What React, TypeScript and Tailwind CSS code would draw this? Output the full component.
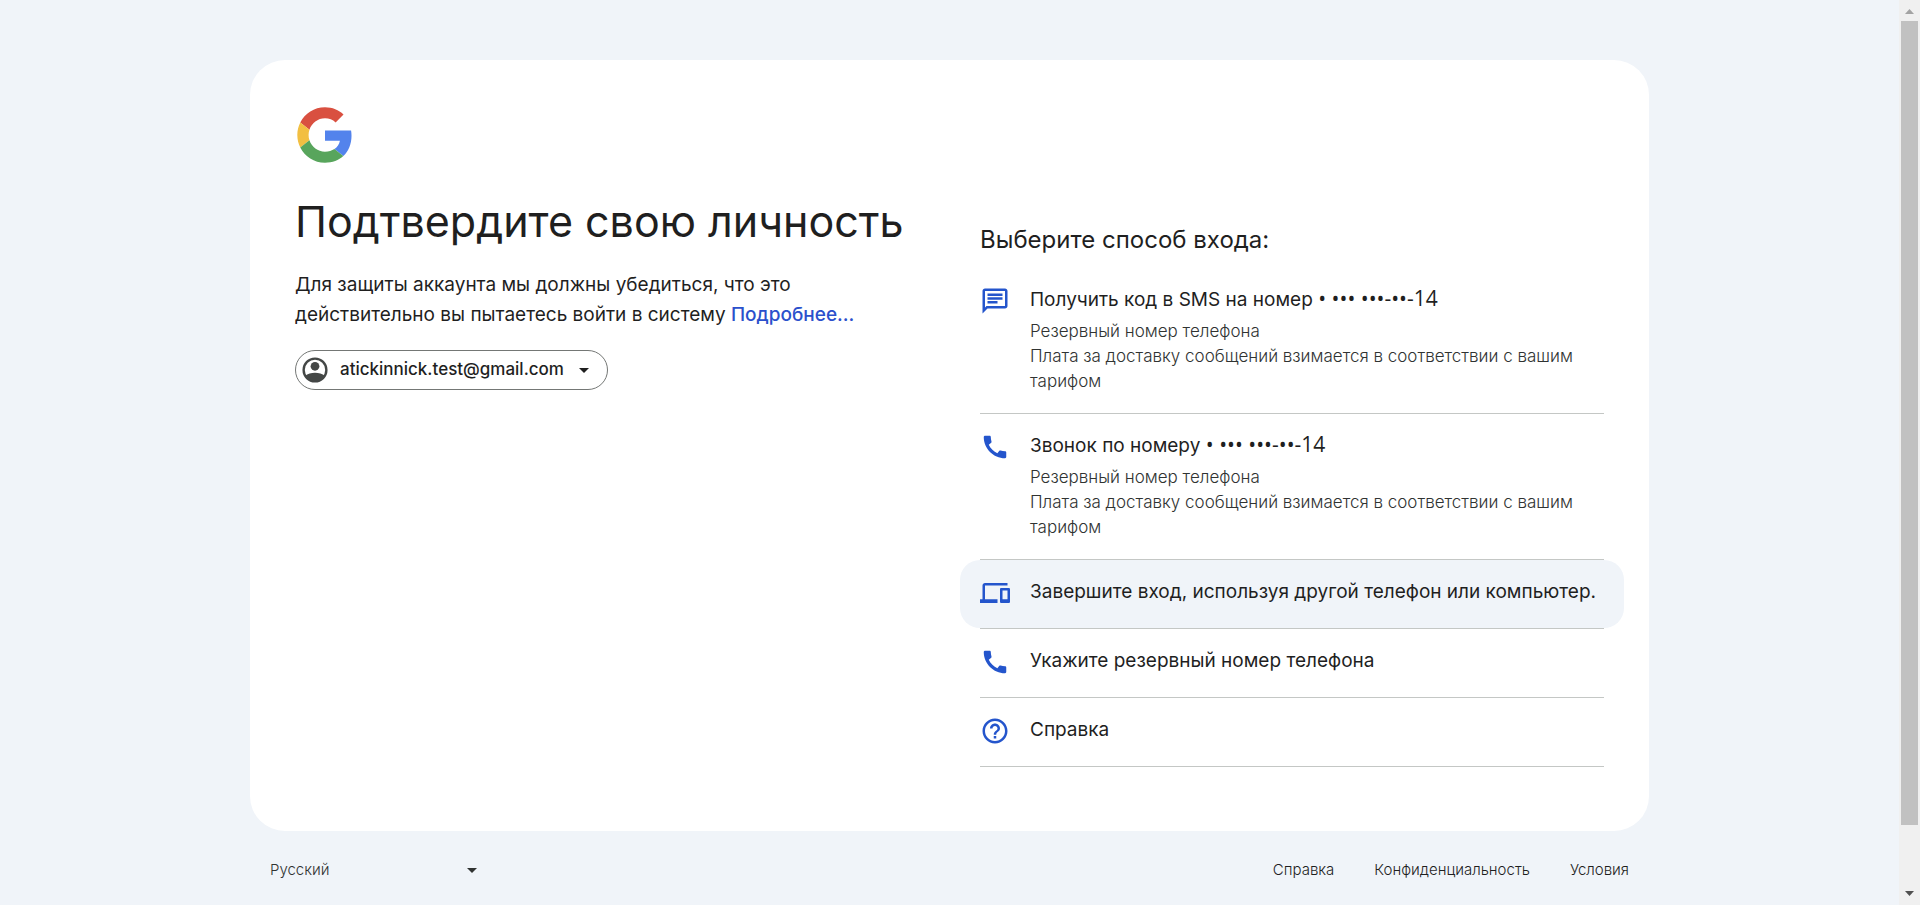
import type { ReactNode } from 'react'

const ICONS = {
  sms: 'M4 4h16v12H5.17L4 17.17V4m0-2c-1.1 0-1.99.9-1.99 2L2 22l4-4h14c1.1 0 2-.9 2-2V4c0-1.1-.9-2-2-2H4zm2 10h8v2H6v-2zm0-3h12v2H6V9zm0-3h12v2H6V6z',
  phone:
    'M20.01 15.38c-1.23 0-2.42-.2-3.53-.56-.35-.12-.74-.03-1.01.24l-1.57 1.97c-2.83-1.35-5.48-3.9-6.89-6.83l1.95-1.66c.27-.28.35-.67.24-1.02-.37-1.11-.56-2.3-.56-3.53 0-.54-.45-.99-.99-.99H4.19C3.65 3 3 3.24 3 3.99 3 13.28 10.73 21 20.01 21c.71 0 .99-.63.99-1.18v-3.45c0-.54-.45-.99-.99-.99z',
  devices:
    'M4 6h18V4H4c-1.1 0-2 .9-2 2v11H0v3h14v-3H4V6zm19 2h-6c-.55 0-1 .45-1 1v10c0 .55.45 1 1 1h6c.55 0 1-.45 1-1V9c0-.55-.45-1-1-1zm-1 9h-4v-7h4v7z',
  help: 'M11 18h2v-2h-2v2zm1-16C6.48 2 2 6.48 2 12s4.48 10 10 10 10-4.48 10-10S17.52 2 12 2zm0 18c-4.41 0-8-3.59-8-8s3.59-8 8-8 8 3.59 8 8-3.59 8-8 8zm0-14c-2.21 0-4 1.79-4 4h2c0-1.1.9-2 2-2s2 .9 2 2c0 2-3 1.75-3 5h2c0-2.25 3-2.5 3-5 0-2.21-1.79-4-4-4z',
}

type Method = {
  icon: keyof typeof ICONS
  title: string
  mask?: string
  notes?: string[]
  active?: boolean
}

const NOTES = [
  'Резервный номер телефона',
  'Плата за доставку сообщений взимается в соответствии с вашим тарифом',
]

const METHODS: Method[] = [
  { icon: 'sms', title: 'Получить код в SMS на номер', mask: '• ••• •••-••-14', notes: NOTES },
  { icon: 'phone', title: 'Звонок по номеру', mask: '• ••• •••-••-14', notes: NOTES },
  { icon: 'devices', title: 'Завершите вход, используя другой телефон или компьютер.', active: true },
  { icon: 'phone', title: 'Укажите резервный номер телефона' },
  { icon: 'help', title: 'Справка' },
]

function GoogleLogo() {
  return (
    <svg viewBox="-2 -2 52 52" className="size-[60px]" role="img" aria-label="Google">
      <path fill="#d95040" d="M24 9.5c3.54 0 6.71 1.22 9.21 3.6l6.85-6.85C35.9 2.38 30.47 0 24 0 14.62 0 6.51 5.38 2.56 13.22l7.98 6.19C12.43 13.72 17.74 9.5 24 9.5z" />
      <path fill="#5383ec" d="M46.98 24.55c0-1.57-.15-3.09-.38-4.55H24v9.02h12.94c-.58 2.96-2.26 5.48-4.78 7.18l7.73 6c4.51-4.18 7.09-10.36 7.09-17.65z" />
      <path fill="#f2bf42" d="M10.53 28.59c-.48-1.45-.76-2.99-.76-4.59s.27-3.14.76-4.59l-7.98-6.19C.92 16.46 0 20.12 0 24c0 3.88.92 7.54 2.56 10.78l7.97-6.19z" />
      <path fill="#58a55c" d="M24 48c6.48 0 11.93-2.13 15.89-5.81l-7.73-6c-2.15 1.45-4.92 2.3-8.16 2.3-6.26 0-11.57-4.22-13.47-9.91l-7.98 6.19C6.51 42.62 14.62 48 24 48z" />
    </svg>
  )
}

function Caret({ className }: { className: string }) {
  return (
    <svg viewBox="0 0 10 5" className={`h-[5px] w-2.5 ${className}`} aria-hidden="true">
      <path fill="currentColor" d="M0 0h10L5 5z" />
    </svg>
  )
}

function MethodRow({ icon, title, mask, notes, active }: Method) {
  return (
    <li className="border-b border-[#c4c7c5]">
      <button
        type="button"
        className={`-mx-5 flex min-h-[68px] w-[calc(100%+40px)] items-start gap-5 rounded-[20px] px-5 pt-[18px] pb-[19px] text-left ${active ? 'bg-[#f0f4f9]' : ''}`}
      >
        <svg viewBox="0 0 24 24" className="size-[30px] shrink-0 text-[#2455cc]" aria-hidden="true">
          <path fill="currentColor" d={ICONS[icon]} />
        </svg>
        <span className="flex flex-col gap-[7px] pt-px">
          <span className="text-[19px] leading-[25px]">
            {title}
            {mask && <span className="font-['Open_Sans',sans-serif] text-[21px] leading-none"> {mask}</span>}
          </span>
          {notes && (
            <span className="text-[17px] leading-[25px] font-light text-[#303332]">
              {notes.map((note) => (
                <span key={note} className="block">
                  {note}
                </span>
              ))}
            </span>
          )}
        </span>
      </button>
    </li>
  )
}

function FooterLink({ children }: { children: ReactNode }) {
  return (
    <a href="#" className="leading-5">
      {children}
    </a>
  )
}

function Scrollbar() {
  return (
    <div className="flex w-[21px] shrink-0 flex-col items-center justify-between bg-[#f0f0f0]" aria-hidden="true">
      <svg viewBox="0 0 9 5" className="mt-[9px] h-[5px] w-[9px]">
        <path fill="#a3a3a3" d="M4.500 0 9 5H0z" />
      </svg>
      <div className="mt-[7px] mb-[66px] w-[17px] grow bg-[#c1c1c1]" />
      <svg viewBox="0 0 9 5" className="mb-[9px] h-[5px] w-[9px]">
        <path fill="#505050" d="M0 0h9L4.500 5z" />
      </svg>
    </div>
  )
}

export default function App() {
  return (
    <div className="flex min-h-screen bg-[#f0f4f9] font-['Inter','Noto_Sans',sans-serif] text-[#1f1f1f]">
      <div className="flex grow flex-col items-center pt-[60px]">
        <div className="w-full max-w-[1399px]">
          <main className="rounded-[35px] bg-white px-[45px] pt-[45px] pb-16">
            <GoogleLogo />
            <div className="grid grid-cols-2 gap-[61px]">
              <section className="pt-[30px]">
                <h1 className="text-[43px] leading-[53px] whitespace-nowrap">Подтвердите свою личность</h1>
                <p className="mt-[22px] text-[19px] leading-[30px]">
                  Для защиты аккаунта мы должны убедиться, что это действительно вы пытаетесь войти в систему{' '}
                  <a href="#" className="font-medium text-[#2b50cc]">
                    Подробнее…
                  </a>
                </p>
                <button
                  type="button"
                  className="mt-5 flex h-10 items-center rounded-full border border-[#747775] pr-[18px] pl-1 text-[17px] font-medium"
                >
                  <svg viewBox="0 0 24 24" className="mr-2.5 size-[30px] text-[#444746]" aria-hidden="true">
                    <circle cx="12" cy="12" r="9.1" fill="none" stroke="currentColor" strokeWidth="1.9" />
                    <circle cx="12" cy="9" r="3.5" fill="currentColor" />
                    <path
                      fill="currentColor"
                      d="M4 16.800C6.200 15 9 14.200 12 14.200s5.800.8 8 2.600C18.200 19.900 15.300 21.600 12 21.600s-6.200-1.700-8-4.800z"
                    />
                  </svg>
                  atickinnick.test@gmail.com
                  <Caret className="ml-[15px]" />
                </button>
              </section>
              <section className="pt-[60px]">
                <h2 className="text-[24px] leading-[30px]">Выберите способ входа:</h2>
                <ul className="mt-[13px]">
                  {METHODS.map((method) => (
                    <MethodRow key={method.title} {...method} />
                  ))}
                </ul>
              </section>
            </div>
          </main>
          <footer className="flex items-center justify-between px-5 pt-[29px] text-[15px] font-light">
            <div className="relative w-[217px] text-[#303332]">
              <select
                aria-label="Язык"
                className="block w-full appearance-none bg-transparent leading-5 focus:outline-none"
                defaultValue="ru"
              >
                <option value="ru">Русский</option>
                <option value="en">English</option>
              </select>
              <Caret className="pointer-events-none absolute top-2 right-2.5" />
            </div>
            <nav className="flex gap-10">
              <FooterLink>Справка</FooterLink>
              <FooterLink>Конфиденциальность</FooterLink>
              <FooterLink>Условия</FooterLink>
            </nav>
          </footer>
        </div>
      </div>
      <Scrollbar />
    </div>
  )
}
